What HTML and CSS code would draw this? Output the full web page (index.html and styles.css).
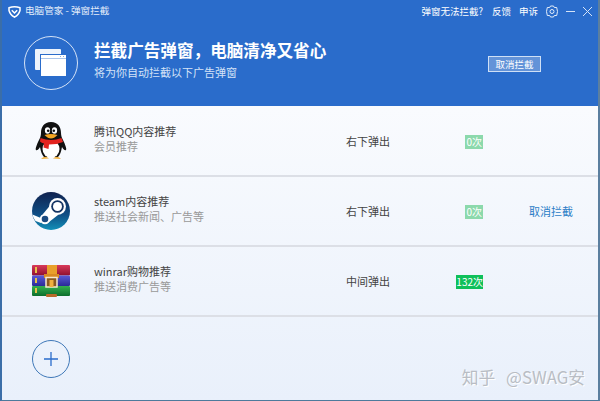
FILE: index.html
```html
<!DOCTYPE html>
<html lang="zh-CN">
<head>
  <meta charset="UTF-8">
  <title>电脑管家 - 弹窗拦截</title>
  <link rel="stylesheet" href="styles.css">
</head>
<body>
  <div class="window">
    <div class="header">
      <div class="titlebar">
        <svg class="logo" width="13" height="12" viewBox="0 0 13 12">
          <path d="M1 1.800 Q6.500 -.2 12 1.800 L12 4.500 Q11 8.500 6.500 11.200 Q2 8.500 1 4.500 Z" fill="none" stroke="#fff" stroke-width="1.500"/>
          <path d="M3.800 4.300 L6.500 7 L9.200 4.300" fill="none" stroke="#fff" stroke-width="1.500"/>
        </svg>
        <span class="app-title">电脑管家 - 弹窗拦截</span>
        <span class="spacer"></span>
        <a class="top-link link-help">弹窗无法拦截?</a>
        <a class="top-link">反馈</a>
        <a class="top-link">申诉</a>
        <svg class="gear" width="12" height="13" viewBox="0 0 12 13">
          <path d="M4.500 1 L7.500 1 L8.300 2.500 L10.700 2.500 L11.500 6.500 L10.700 10.500 L8.300 10.500 L7.500 12 L4.500 12 L3.700 10.500 L1.300 10.500 L.5 6.500 L1.300 2.500 L3.700 2.500 Z" fill="none" stroke="#e3edfa"/>
          <circle cx="6" cy="6.500" r="2" fill="none" stroke="#e3edfa"/>
        </svg>
        <svg class="win-min" width="9" height="9" viewBox="0 0 9 9">
          <path d="M0 4.500 H9" stroke="#d5e3f7"/>
        </svg>
        <svg class="win-close" width="9" height="9" viewBox="0 0 9 9">
          <path d="M0 0 L9 9 M9 0 L0 9" stroke="#d5e3f7"/>
        </svg>
      </div>
      <div class="banner">
        <div class="banner-icon">
          <svg width="32" height="28" viewBox="0 0 32 28">
            <rect x="0" y="0" width="26" height="21" rx="1" fill="#eef4fc"/>
            <rect x="5.500" y="5.500" width="26" height="22" fill="#fff" stroke="#2a6ccb"/>
            <path d="M6 9.500 H31" stroke="#a9c4ea"/>
            <path d="M25 7.500 H26 M28 7.500 H29" stroke="#8aaee0"/>
          </svg>
        </div>
        <div class="banner-text">
          <h1>拦截广告弹窗，电脑清净又省心</h1>
          <p>将为你自动拦截以下广告弹窗</p>
        </div>
        <button class="stop-btn">取消拦截</button>
      </div>
    </div>

    <div class="list">
      <div class="row">
        <div class="row-icon">
          <svg width="38" height="38" viewBox="0 0 38 38">
            <path d="M19 0 C12 0 9 5 9 11 C9 14 8 16 7 18 C5 22 3 27 4 28 C5 29 7 27 8 25 C9 30 10 33 12 35 L26 35 C28 33 29 30 30 25 C31 27 33 29 34 28 C35 27 33 22 31 18 C30 16 29 14 29 11 C29 5 26 0 19 0 Z" fill="#111"/>
            <ellipse cx="19" cy="27" rx="8.500" ry="9" fill="#fff"/>
            <path d="M8.500 16 Q19 20 29.500 16 L31 20 Q25 22.500 17 22.500 L16.500 27 L11.500 25.500 L12 21.500 Q9.500 21 8 19.500 Z" fill="#e3231e"/>
            <ellipse cx="15.500" cy="8.500" rx="2.600" ry="3.300" fill="#fff"/>
            <ellipse cx="22.500" cy="8.500" rx="2.600" ry="3.300" fill="#fff"/>
            <circle cx="16.200" cy="8.800" r="1.300" fill="#111"/>
            <circle cx="21.800" cy="8.800" r="1.300" fill="#111"/>
            <path d="M12.500 13 Q19 11 25.500 13 Q22 16.500 19 16.500 Q16 16.500 12.500 13 Z" fill="#f5a623"/>
            <path d="M9 37 Q13 33 17 36.500 Z M21 36.500 Q25 33 29 37 Z" fill="#f0b040"/>
          </svg>
        </div>
        <div class="row-info">
          <div class="row-name">腾讯QQ内容推荐</div>
          <div class="row-desc">会员推荐</div>
        </div>
        <div class="row-pos">右下弹出</div>
        <div class="row-count"><span class="count zero">0次</span></div>
        <div class="row-action"></div>
      </div>

      <div class="row">
        <div class="row-icon">
          <svg width="38" height="38" viewBox="0 0 38 38">
            <defs>
              <linearGradient id="steam" x1="0" y1="0" x2="0" y2="1">
                <stop offset="0" stop-color="#10224f"/>
                <stop offset="0.6" stop-color="#0f4f86"/>
                <stop offset="1" stop-color="#1290b8"/>
              </linearGradient>
            </defs>
            <circle cx="19" cy="19" r="19" fill="url(#steam)"/>
            <path d="M18.500 13 L26 23 L17 30 L11 22 Z" fill="#fff"/>
            <path d="M.4 22.500 L10 26.500 L9 31 L3.500 29 Q1.200 26 .4 22.500 Z" fill="#fff"/>
            <circle cx="25.500" cy="14.500" r="8.500" fill="#fff"/>
            <circle cx="25.500" cy="14.500" r="6.300" fill="#143463"/>
            <circle cx="25.500" cy="14.500" r="4.500" fill="#fff"/>
            <circle cx="13" cy="27" r="5.200" fill="#fff"/>
            <circle cx="13" cy="27" r="3.300" fill="#1a4a80"/>
          </svg>
        </div>
        <div class="row-info">
          <div class="row-name">steam内容推荐</div>
          <div class="row-desc">推送社会新闻、广告等</div>
        </div>
        <div class="row-pos">右下弹出</div>
        <div class="row-count"><span class="count zero">0次</span></div>
        <div class="row-action"><a class="cancel">取消拦截</a></div>
      </div>

      <div class="row">
        <div class="row-icon">
          <svg width="38" height="32" viewBox="0 0 38 32">
            <defs>
              <linearGradient id="book-red" x1="0" y1="0" x2="0" y2="1">
                <stop offset="0" stop-color="#d93a5a"/>
                <stop offset="1" stop-color="#8f1030"/>
              </linearGradient>
              <linearGradient id="book-blue" x1="0" y1="0" x2="0" y2="1">
                <stop offset="0" stop-color="#5a5ad8"/>
                <stop offset="1" stop-color="#2a2a96"/>
              </linearGradient>
              <linearGradient id="book-green" x1="0" y1="0" x2="0" y2="1">
                <stop offset="0" stop-color="#35b050"/>
                <stop offset="1" stop-color="#0c6e2c"/>
              </linearGradient>
            </defs>
            <rect x="0" y="0" width="38" height="10.500" rx="1" fill="url(#book-red)"/>
            <rect x="0" y="10.500" width="38" height="10.500" rx="1" fill="url(#book-blue)"/>
            <rect x="0" y="21" width="38" height="10" rx="1" fill="url(#book-green)"/>
            <rect x="3" y="2" width="2" height="6" fill="#e8c04a"/>
            <rect x="3" y="13" width="2" height="5" fill="#e8c04a"/>
            <rect x="3" y="23" width="2" height="5" fill="#e8c04a"/>
            <rect x="15" y="-1" width="10" height="14" fill="#e9a02b"/>
            <rect x="12" y="9" width="15" height="4" fill="#d98a22"/>
            <rect x="14" y="12.500" width="11" height="9.500" fill="#8a5a20" stroke="#f6ead0" stroke-width="1.500"/>
            <rect x="17.500" y="15" width="4" height="7" fill="#f0b040"/>
            <rect x="14" y="29" width="11" height="3" rx="1" fill="#b96a2a"/>
          </svg>
        </div>
        <div class="row-info">
          <div class="row-name">winrar购物推荐</div>
          <div class="row-desc">推送消费广告等</div>
        </div>
        <div class="row-pos">中间弹出</div>
        <div class="row-count"><span class="count">132次</span></div>
        <div class="row-action"></div>
      </div>
    </div>

    <div class="footer">
      <div class="add-btn">
        <svg width="16" height="16" viewBox="0 0 16 16">
          <path d="M8 1 V15 M1 8 H15" stroke="#2a6ccb" stroke-width="1.300"/>
        </svg>
      </div>
      <span class="watermark">知乎 @SWAG安</span>
    </div>
  </div>
</body>
</html>
```

FILE: styles.css
```css
* {
  box-sizing: border-box;
}
html, body {
  margin: 0;
  padding: 0;
}
body {
  width: 600px;
  height: 401px;
  overflow: hidden;
  font-family: "Noto Sans CJK SC", "Liberation Sans", sans-serif;
  font-size: 11px;
  color: #444;
}
.window {
  width: 600px;
  height: 401px;
  display: flex;
  flex-direction: column;
  border-left: 2px solid #3b6ea8;
  border-right: 2px solid #5b7f9f;
  border-bottom: 1px solid #4d7a9c;
  background: linear-gradient(#fff, #e9f0fb);
}
.header {
  height: 106px;
  background-color: #2a6ccb;
  color: #fff;
}
.titlebar {
  height: 22px;
  display: flex;
  align-items: center;
  padding: 0 6px;
}
.logo {
  margin: 2px 4px 0 0;
}
.app-title {
  font-size: 9.600px;
  color: #e3edfa;
  margin-bottom: 3px;
}
.spacer {
  flex: 1;
}
.top-link {
  font-size: 9.500px;
  margin-right: 8px;
}
.link-help {
  margin-right: 9px;
}
.gear {
  margin-right: 8px;
}
.win-min {
  margin-right: 8px;
}
.banner {
  display: flex;
  align-items: flex-start;
  padding: 14px 57px 0 22px;
}
.banner-icon {
  width: 54px;
  height: 54px;
  border: 1.500px solid #d5e3f7;
  border-radius: 50%;
  display: flex;
  align-items: center;
  justify-content: center;
}
.banner-text {
  flex: 1;
  margin: 3px 0 0 16px;
}
.banner-text h1 {
  margin: 0;
  font-size: 16.600px;
  line-height: 22px;
  font-weight: 700;
}
.banner-text p {
  margin: 4px 0 0;
  font-size: 11px;
  line-height: 14px;
  color: #d5e3f7;
}
.stop-btn {
  width: 53px;
  height: 16px;
  padding: 0;
  margin-top: 20px;
  font-family: inherit;
  font-size: 9.500px;
  line-height: 14px;
  color: #fff;
  background-color: #6393d8;
  border: 1px solid #cfe0f6;
}
.list {
  padding-top: 1px;
}
.row {
  height: 70px;
  display: flex;
  align-items: center;
  border-bottom: 2px solid #dcdfe6;
  padding-left: 30px;
}
.row-icon {
  width: 38px;
  display: flex;
  justify-content: center;
}
.row-info {
  width: 252px;
  margin-left: 24px;
  padding-bottom: 6px;
}
.row-name {
  font-size: 11px;
  line-height: 16px;
  color: #444;
}
.row-desc {
  font-size: 11px;
  line-height: 15px;
  color: #999;
}
.row-pos {
  width: 89px;
  font-size: 11px;
  color: #444;
}
.row-count {
  width: 48px;
  text-align: right;
}
.count {
  display: inline-block;
  height: 14px;
  line-height: 14px;
  font-size: 10px;
  color: #fff;
  background-color: #0fc05a;
}
.count.zero {
  padding: 0 1px;
  background-color: #8cd9ac;
}
.row-action {
  flex: 1;
  padding-left: 46px;
}
.cancel {
  font-size: 11px;
  color: #2a7cc6;
}
.footer {
  flex: 1;
  display: flex;
  align-items: center;
  justify-content: space-between;
  padding: 0 13px 0 30px;
}
.add-btn {
  width: 38px;
  height: 38px;
  border: 1px solid #3f78b8;
  border-radius: 50%;
  display: flex;
  align-items: center;
  justify-content: center;
}
.watermark {
  align-self: flex-end;
  margin-bottom: 13px;
  font-size: 16.800px;
  line-height: 20px;
  word-spacing: 7px;
  color: #b9bdc4;
  text-shadow: 1px 1px 0 #fff;
}
```
